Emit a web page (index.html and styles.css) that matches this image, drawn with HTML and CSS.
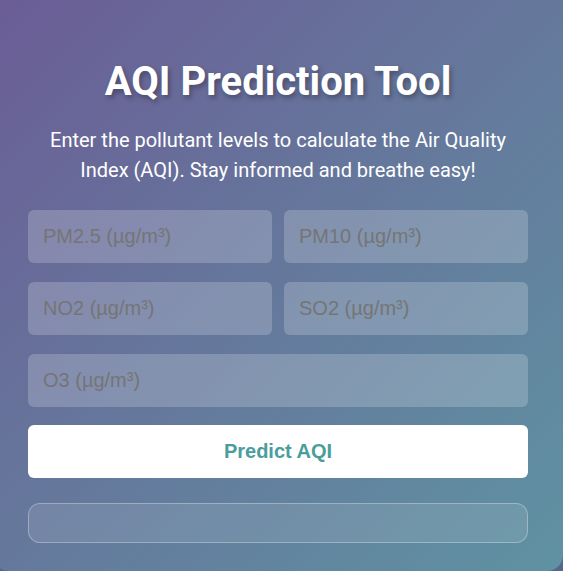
FILE: index.html
```html
<!DOCTYPE html>
<html lang="en">
<head>
<meta charset="utf-8">
<title>AQI Prediction Tool</title>
<link rel="stylesheet" href="styles.css">
</head>
<body>
  <main class="card">
    <h1 class="title">AQI Prediction Tool</h1>
    <p class="subtitle">Enter the pollutant levels to calculate the Air Quality Index (AQI). Stay informed and breathe easy!</p>
    <form class="form">
      <div class="fields">
        <input class="field" type="text" placeholder="PM2.5 (µg/m³)">
        <input class="field" type="text" placeholder="PM10 (µg/m³)">
        <input class="field" type="text" placeholder="NO2 (µg/m³)">
        <input class="field" type="text" placeholder="SO2 (µg/m³)">
        <input class="field field-wide" type="text" placeholder="O3 (µg/m³)">
      </div>
      <button class="predict" type="button">Predict AQI</button>
    </form>
    <div class="result"></div>
  </main>
</body>
</html>
```

FILE: styles.css
```css
html {
  background: #56658a;
}
body {
  margin: 0;
  height: 571px;
  overflow: hidden;
  font-family: Roboto, "Noto Sans", sans-serif;
}
.card {
  box-sizing: border-box;
  width: 570px;
  height: 583px;
  margin: -12px 0 0 -7px;
  padding: 70px 35px 0 35px;
  border-radius: 16px;
  background: linear-gradient(135deg, #6b5c96 0%, #65789c 50%, #5f92a2 100%);
  color: #fff;
}
.title {
  margin: 0;
  font-size: 40px;
  font-weight: 700;
  line-height: normal;
  text-align: center;
  text-shadow: 2px 3px 5px rgba(0, 0, 0, 0.3);
}
.subtitle {
  margin: 20px 0 0;
  font-size: 20px;
  line-height: 30px;
  text-align: center;
}
.form {
  margin-top: 25px;
}
.fields {
  display: grid;
  grid-template-columns: repeat(2, minmax(0, 1fr));
  column-gap: 12px;
  row-gap: 19px;
}
.field {
  box-sizing: border-box;
  width: 100%;
  min-width: 0;
  height: 53px;
  padding: 0 15px;
  border: none;
  border-radius: 6px;
  background: rgba(255, 255, 255, 0.2);
  font-family: "Liberation Sans", Arial, sans-serif;
  font-size: 20px;
  color: #333;
  outline: none;
}
.field::placeholder {
  color: #757575;
}
.field-wide {
  grid-column: 1 / -1;
}
.predict {
  display: block;
  width: 100%;
  height: 53px;
  margin-top: 18px;
  border: none;
  border-radius: 6px;
  background: #fff;
  color: #4a9d9d;
  font-family: "Liberation Sans", Arial, sans-serif;
  font-size: 20px;
  font-weight: 700;
}
.result {
  box-sizing: border-box;
  height: 40px;
  margin-top: 25px;
  border: 1px solid rgba(255, 255, 255, 0.3);
  border-radius: 12px;
  background: rgba(255, 255, 255, 0.1);
}
```
